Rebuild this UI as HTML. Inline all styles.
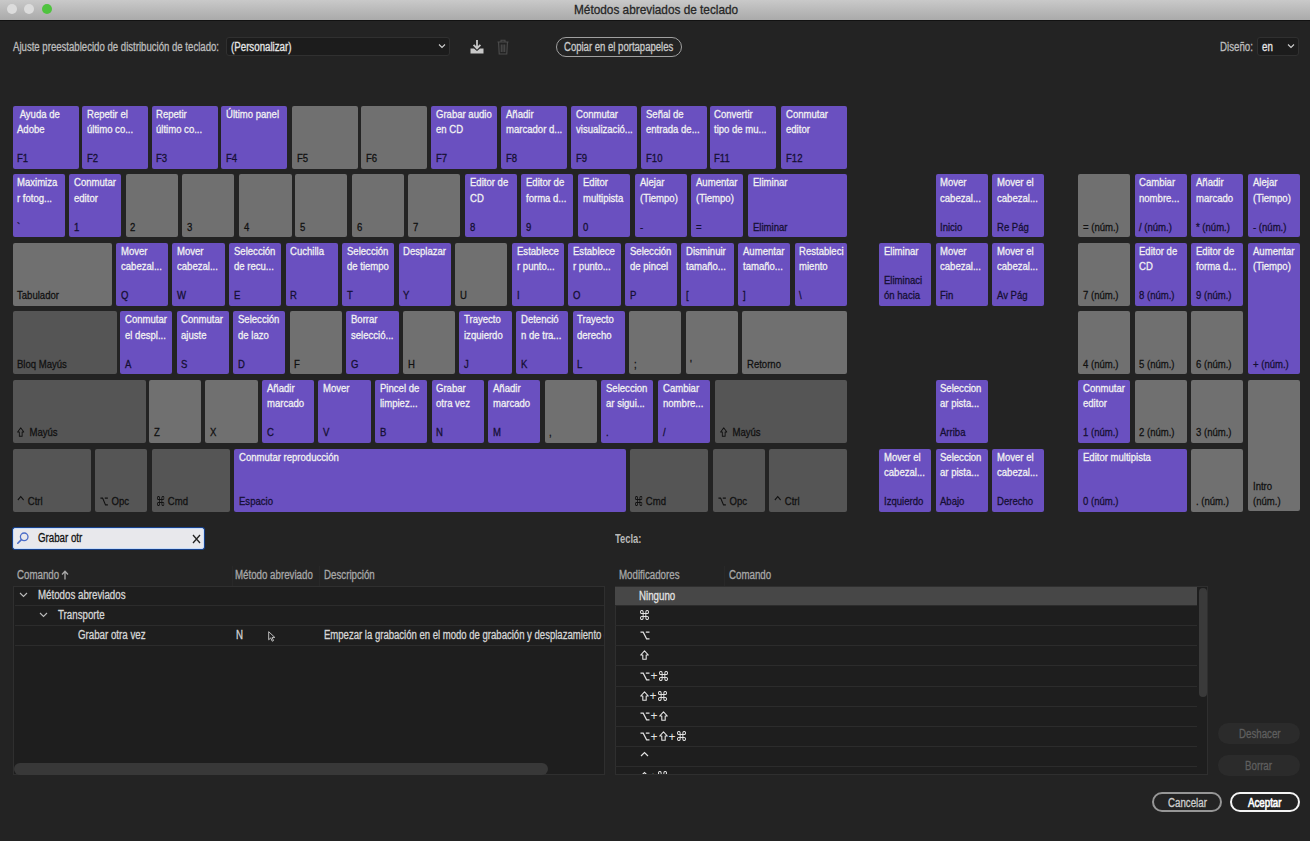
<!DOCTYPE html>
<html><head><meta charset="utf-8"><title>Métodos abreviados de teclado</title>
<style>
html,body{margin:0;padding:0}
body{width:1310px;height:841px;overflow:hidden;position:relative;background:#232323;font-family:"Liberation Sans",sans-serif}
.t{position:absolute;white-space:nowrap;transform-origin:0 0;-webkit-text-stroke:0.3px currentColor}
</style></head><body>

<div style="position:absolute;left:0.0px;top:0.0px;width:1310.0px;height:20.0px;background:linear-gradient(#c9c9c9,#aaaaaa)"></div>
<div style="position:absolute;left:0.0px;top:20.0px;width:1310.0px;height:1.0px;background:#121212"></div>
<div style="position:absolute;left:6.5px;top:4.0px;width:10.0px;height:10.0px;border-radius:50%;background:#dcdcdc"></div>
<div style="position:absolute;left:23.9px;top:4.0px;width:10.0px;height:10.0px;border-radius:50%;background:#dcdcdc"></div>
<div style="position:absolute;left:41.5px;top:4.0px;width:10.0px;height:10.0px;border-radius:50%;background:#4fc33f"></div>
<div class="t" style="left:573.5px;top:2.87px;font-size:13.5px;line-height:13.5px;color:#262626;transform:scaleX(0.875);font-weight:normal;">Métodos abreviados de teclado</div>
<div class="t" style="left:13.4px;top:41.24px;font-size:12px;line-height:12px;color:#bdbdbd;transform:scaleX(0.8);font-weight:normal;">Ajuste preestablecido de distribución de teclado:</div>
<div style="position:absolute;left:225.6px;top:37.3px;width:224.8px;height:19.1px;background:#1c1c1c;border:1px solid #303030;border-radius:3px;box-sizing:border-box"></div>
<div class="t" style="left:230.5px;top:40.84px;font-size:12px;line-height:12px;color:#e6e6e6;transform:scaleX(0.81);font-weight:normal;">(Personalizar)</div>
<svg style="position:absolute;left:437px;top:42px" width="10" height="8" viewBox="0 0 10 8"><path d="M2 2.5 L5 5.5 L8 2.5" fill="none" stroke="#d0d0d0" stroke-width="1.1"/></svg>
<svg style="position:absolute;left:469px;top:39px" width="16" height="16" viewBox="0 0 16 16"><path d="M8 1 V9 M4.6 5.8 L8 9.4 L11.4 5.8" fill="none" stroke="#c8c8c8" stroke-width="1.8"/><path d="M1.5 9.5 H5 L8 12 L11 9.5 H14.5 V14.5 H1.5 Z" fill="#c8c8c8"/></svg>
<svg style="position:absolute;left:497px;top:39px" width="12" height="16" viewBox="0 0 12 16"><path d="M0.5 3 H11.5 M4 3 V1.2 H8 V3 M1.6 3.5 L2.2 15 H9.8 L10.4 3.5 M4.3 5.5 V13 M6 5.5 V13 M7.7 5.5 V13" fill="none" stroke="#4d4d4d" stroke-width="1.1"/></svg>
<div style="position:absolute;left:555.7px;top:36.8px;width:126.7px;height:20.6px;border:1.5px solid #a0a0a0;border-radius:10px;box-sizing:border-box"></div>
<div class="t" style="left:564.2px;top:40.84px;font-size:12px;line-height:12px;color:#cacaca;transform:scaleX(0.795);font-weight:normal;">Copiar en el portapapeles</div>
<div class="t" style="left:1220.4px;top:40.84px;font-size:12px;line-height:12px;color:#bdbdbd;transform:scaleX(0.81);font-weight:normal;">Diseño:</div>
<div style="position:absolute;left:1257.4px;top:37.0px;width:42.0px;height:19.4px;background:#1c1c1c;border:1px solid #303030;border-radius:3px;box-sizing:border-box"></div>
<div class="t" style="left:1262.0px;top:40.84px;font-size:12px;line-height:12px;color:#e6e6e6;transform:scaleX(0.81);font-weight:normal;">en</div>
<svg style="position:absolute;left:1286px;top:42px" width="10" height="8" viewBox="0 0 10 8"><path d="M2 2.5 L5 5.5 L8 2.5" fill="none" stroke="#d0d0d0" stroke-width="1.1"/></svg>
<div style="position:absolute;left:12.6px;top:105.5px;width:66.1px;height:63.0px;background:#6a50c0;border-radius:2px"></div>
<div class="t" style="left:17.3px;top:108.77px;font-size:11.5px;line-height:11.5px;color:#f2f2f2;transform:scaleX(0.83);font-weight:normal;">&nbsp;Ayuda&nbsp;de</div>
<div class="t" style="left:17.3px;top:124.17px;font-size:11.5px;line-height:11.5px;color:#f2f2f2;transform:scaleX(0.83);font-weight:normal;">Adobe</div>
<div class="t" style="left:17.3px;top:153.17px;font-size:11.5px;line-height:11.5px;color:#150f33;transform:scaleX(0.83);font-weight:normal;">F1</div>
<div style="position:absolute;left:81.8px;top:105.5px;width:66.1px;height:63.0px;background:#6a50c0;border-radius:2px"></div>
<div class="t" style="left:86.5px;top:108.77px;font-size:11.5px;line-height:11.5px;color:#f2f2f2;transform:scaleX(0.83);font-weight:normal;">Repetir el</div>
<div class="t" style="left:86.5px;top:124.17px;font-size:11.5px;line-height:11.5px;color:#f2f2f2;transform:scaleX(0.83);font-weight:normal;">último co...</div>
<div class="t" style="left:86.5px;top:153.17px;font-size:11.5px;line-height:11.5px;color:#150f33;transform:scaleX(0.83);font-weight:normal;">F2</div>
<div style="position:absolute;left:151.6px;top:105.5px;width:66.1px;height:63.0px;background:#6a50c0;border-radius:2px"></div>
<div class="t" style="left:156.3px;top:108.77px;font-size:11.5px;line-height:11.5px;color:#f2f2f2;transform:scaleX(0.83);font-weight:normal;">Repetir</div>
<div class="t" style="left:156.3px;top:124.17px;font-size:11.5px;line-height:11.5px;color:#f2f2f2;transform:scaleX(0.83);font-weight:normal;">último co...</div>
<div class="t" style="left:156.3px;top:153.17px;font-size:11.5px;line-height:11.5px;color:#150f33;transform:scaleX(0.83);font-weight:normal;">F3</div>
<div style="position:absolute;left:220.9px;top:105.5px;width:66.1px;height:63.0px;background:#6a50c0;border-radius:2px"></div>
<div class="t" style="left:225.6px;top:108.77px;font-size:11.5px;line-height:11.5px;color:#f2f2f2;transform:scaleX(0.83);font-weight:normal;">Último panel</div>
<div class="t" style="left:225.6px;top:153.17px;font-size:11.5px;line-height:11.5px;color:#150f33;transform:scaleX(0.83);font-weight:normal;">F4</div>
<div style="position:absolute;left:291.9px;top:105.5px;width:66.1px;height:63.0px;background:#707070;border-radius:2px"></div>
<div class="t" style="left:296.6px;top:153.17px;font-size:11.5px;line-height:11.5px;color:#111111;transform:scaleX(0.83);font-weight:normal;">F5</div>
<div style="position:absolute;left:361.1px;top:105.5px;width:66.1px;height:63.0px;background:#707070;border-radius:2px"></div>
<div class="t" style="left:365.8px;top:153.17px;font-size:11.5px;line-height:11.5px;color:#111111;transform:scaleX(0.83);font-weight:normal;">F6</div>
<div style="position:absolute;left:430.9px;top:105.5px;width:66.1px;height:63.0px;background:#6a50c0;border-radius:2px"></div>
<div class="t" style="left:435.6px;top:108.77px;font-size:11.5px;line-height:11.5px;color:#f2f2f2;transform:scaleX(0.83);font-weight:normal;">Grabar audio</div>
<div class="t" style="left:435.6px;top:124.17px;font-size:11.5px;line-height:11.5px;color:#f2f2f2;transform:scaleX(0.83);font-weight:normal;">en CD</div>
<div class="t" style="left:435.6px;top:153.17px;font-size:11.5px;line-height:11.5px;color:#150f33;transform:scaleX(0.83);font-weight:normal;">F7</div>
<div style="position:absolute;left:501.4px;top:105.5px;width:66.1px;height:63.0px;background:#6a50c0;border-radius:2px"></div>
<div class="t" style="left:506.1px;top:108.77px;font-size:11.5px;line-height:11.5px;color:#f2f2f2;transform:scaleX(0.83);font-weight:normal;">Añadir</div>
<div class="t" style="left:506.1px;top:124.17px;font-size:11.5px;line-height:11.5px;color:#f2f2f2;transform:scaleX(0.83);font-weight:normal;">marcador d...</div>
<div class="t" style="left:506.1px;top:153.17px;font-size:11.5px;line-height:11.5px;color:#150f33;transform:scaleX(0.83);font-weight:normal;">F8</div>
<div style="position:absolute;left:570.8px;top:105.5px;width:66.1px;height:63.0px;background:#6a50c0;border-radius:2px"></div>
<div class="t" style="left:575.5px;top:108.77px;font-size:11.5px;line-height:11.5px;color:#f2f2f2;transform:scaleX(0.83);font-weight:normal;">Conmutar</div>
<div class="t" style="left:575.5px;top:124.17px;font-size:11.5px;line-height:11.5px;color:#f2f2f2;transform:scaleX(0.83);font-weight:normal;">visualizació...</div>
<div class="t" style="left:575.5px;top:153.17px;font-size:11.5px;line-height:11.5px;color:#150f33;transform:scaleX(0.83);font-weight:normal;">F9</div>
<div style="position:absolute;left:640.9px;top:105.5px;width:66.1px;height:63.0px;background:#6a50c0;border-radius:2px"></div>
<div class="t" style="left:645.6px;top:108.77px;font-size:11.5px;line-height:11.5px;color:#f2f2f2;transform:scaleX(0.83);font-weight:normal;">Señal de</div>
<div class="t" style="left:645.6px;top:124.17px;font-size:11.5px;line-height:11.5px;color:#f2f2f2;transform:scaleX(0.83);font-weight:normal;">entrada de...</div>
<div class="t" style="left:645.6px;top:153.17px;font-size:11.5px;line-height:11.5px;color:#150f33;transform:scaleX(0.83);font-weight:normal;">F10</div>
<div style="position:absolute;left:709.7px;top:105.5px;width:66.1px;height:63.0px;background:#6a50c0;border-radius:2px"></div>
<div class="t" style="left:714.4px;top:108.77px;font-size:11.5px;line-height:11.5px;color:#f2f2f2;transform:scaleX(0.83);font-weight:normal;">Convertir</div>
<div class="t" style="left:714.4px;top:124.17px;font-size:11.5px;line-height:11.5px;color:#f2f2f2;transform:scaleX(0.83);font-weight:normal;">tipo de mu...</div>
<div class="t" style="left:714.4px;top:153.17px;font-size:11.5px;line-height:11.5px;color:#150f33;transform:scaleX(0.83);font-weight:normal;">F11</div>
<div style="position:absolute;left:780.8px;top:105.5px;width:66.1px;height:63.0px;background:#6a50c0;border-radius:2px"></div>
<div class="t" style="left:785.5px;top:108.77px;font-size:11.5px;line-height:11.5px;color:#f2f2f2;transform:scaleX(0.83);font-weight:normal;">Conmutar</div>
<div class="t" style="left:785.5px;top:124.17px;font-size:11.5px;line-height:11.5px;color:#f2f2f2;transform:scaleX(0.83);font-weight:normal;">editor</div>
<div class="t" style="left:785.5px;top:153.17px;font-size:11.5px;line-height:11.5px;color:#150f33;transform:scaleX(0.83);font-weight:normal;">F12</div>
<div style="position:absolute;left:12.6px;top:174.0px;width:52.3px;height:63.0px;background:#6a50c0;border-radius:2px"></div>
<div class="t" style="left:17.3px;top:177.27px;font-size:11.5px;line-height:11.5px;color:#f2f2f2;transform:scaleX(0.83);font-weight:normal;">Maximiza</div>
<div class="t" style="left:17.3px;top:192.67px;font-size:11.5px;line-height:11.5px;color:#f2f2f2;transform:scaleX(0.83);font-weight:normal;">r fotog...</div>
<div class="t" style="left:17.3px;top:221.67px;font-size:11.5px;line-height:11.5px;color:#150f33;transform:scaleX(0.83);font-weight:normal;">`</div>
<div style="position:absolute;left:68.8px;top:174.0px;width:52.3px;height:63.0px;background:#6a50c0;border-radius:2px"></div>
<div class="t" style="left:73.5px;top:177.27px;font-size:11.5px;line-height:11.5px;color:#f2f2f2;transform:scaleX(0.83);font-weight:normal;">Conmutar</div>
<div class="t" style="left:73.5px;top:192.67px;font-size:11.5px;line-height:11.5px;color:#f2f2f2;transform:scaleX(0.83);font-weight:normal;">editor</div>
<div class="t" style="left:73.5px;top:221.67px;font-size:11.5px;line-height:11.5px;color:#150f33;transform:scaleX(0.83);font-weight:normal;">1</div>
<div style="position:absolute;left:125.6px;top:174.0px;width:52.3px;height:63.0px;background:#707070;border-radius:2px"></div>
<div class="t" style="left:130.3px;top:221.67px;font-size:11.5px;line-height:11.5px;color:#111111;transform:scaleX(0.83);font-weight:normal;">2</div>
<div style="position:absolute;left:181.9px;top:174.0px;width:52.3px;height:63.0px;background:#707070;border-radius:2px"></div>
<div class="t" style="left:186.6px;top:221.67px;font-size:11.5px;line-height:11.5px;color:#111111;transform:scaleX(0.83);font-weight:normal;">3</div>
<div style="position:absolute;left:239.3px;top:174.0px;width:52.3px;height:63.0px;background:#707070;border-radius:2px"></div>
<div class="t" style="left:244.0px;top:221.67px;font-size:11.5px;line-height:11.5px;color:#111111;transform:scaleX(0.83);font-weight:normal;">4</div>
<div style="position:absolute;left:295.1px;top:174.0px;width:52.3px;height:63.0px;background:#707070;border-radius:2px"></div>
<div class="t" style="left:299.8px;top:221.67px;font-size:11.5px;line-height:11.5px;color:#111111;transform:scaleX(0.83);font-weight:normal;">5</div>
<div style="position:absolute;left:351.9px;top:174.0px;width:52.3px;height:63.0px;background:#707070;border-radius:2px"></div>
<div class="t" style="left:356.6px;top:221.67px;font-size:11.5px;line-height:11.5px;color:#111111;transform:scaleX(0.83);font-weight:normal;">6</div>
<div style="position:absolute;left:408.1px;top:174.0px;width:52.3px;height:63.0px;background:#707070;border-radius:2px"></div>
<div class="t" style="left:412.8px;top:221.67px;font-size:11.5px;line-height:11.5px;color:#111111;transform:scaleX(0.83);font-weight:normal;">7</div>
<div style="position:absolute;left:464.8px;top:174.0px;width:52.3px;height:63.0px;background:#6a50c0;border-radius:2px"></div>
<div class="t" style="left:469.5px;top:177.27px;font-size:11.5px;line-height:11.5px;color:#f2f2f2;transform:scaleX(0.83);font-weight:normal;">Editor de</div>
<div class="t" style="left:469.5px;top:192.67px;font-size:11.5px;line-height:11.5px;color:#f2f2f2;transform:scaleX(0.83);font-weight:normal;">CD</div>
<div class="t" style="left:469.5px;top:221.67px;font-size:11.5px;line-height:11.5px;color:#150f33;transform:scaleX(0.83);font-weight:normal;">8</div>
<div style="position:absolute;left:521.2px;top:174.0px;width:52.3px;height:63.0px;background:#6a50c0;border-radius:2px"></div>
<div class="t" style="left:525.9px;top:177.27px;font-size:11.5px;line-height:11.5px;color:#f2f2f2;transform:scaleX(0.83);font-weight:normal;">Editor de</div>
<div class="t" style="left:525.9px;top:192.67px;font-size:11.5px;line-height:11.5px;color:#f2f2f2;transform:scaleX(0.83);font-weight:normal;">forma d...</div>
<div class="t" style="left:525.9px;top:221.67px;font-size:11.5px;line-height:11.5px;color:#150f33;transform:scaleX(0.83);font-weight:normal;">9</div>
<div style="position:absolute;left:577.8px;top:174.0px;width:52.3px;height:63.0px;background:#6a50c0;border-radius:2px"></div>
<div class="t" style="left:582.5px;top:177.27px;font-size:11.5px;line-height:11.5px;color:#f2f2f2;transform:scaleX(0.83);font-weight:normal;">Editor</div>
<div class="t" style="left:582.5px;top:192.67px;font-size:11.5px;line-height:11.5px;color:#f2f2f2;transform:scaleX(0.83);font-weight:normal;">multipista</div>
<div class="t" style="left:582.5px;top:221.67px;font-size:11.5px;line-height:11.5px;color:#150f33;transform:scaleX(0.83);font-weight:normal;">0</div>
<div style="position:absolute;left:634.9px;top:174.0px;width:52.3px;height:63.0px;background:#6a50c0;border-radius:2px"></div>
<div class="t" style="left:639.6px;top:177.27px;font-size:11.5px;line-height:11.5px;color:#f2f2f2;transform:scaleX(0.83);font-weight:normal;">Alejar</div>
<div class="t" style="left:639.6px;top:192.67px;font-size:11.5px;line-height:11.5px;color:#f2f2f2;transform:scaleX(0.83);font-weight:normal;">(Tiempo)</div>
<div class="t" style="left:639.6px;top:221.67px;font-size:11.5px;line-height:11.5px;color:#150f33;transform:scaleX(0.83);font-weight:normal;">-</div>
<div style="position:absolute;left:691.2px;top:174.0px;width:52.3px;height:63.0px;background:#6a50c0;border-radius:2px"></div>
<div class="t" style="left:695.9px;top:177.27px;font-size:11.5px;line-height:11.5px;color:#f2f2f2;transform:scaleX(0.83);font-weight:normal;">Aumentar</div>
<div class="t" style="left:695.9px;top:192.67px;font-size:11.5px;line-height:11.5px;color:#f2f2f2;transform:scaleX(0.83);font-weight:normal;">(Tiempo)</div>
<div class="t" style="left:695.9px;top:221.67px;font-size:11.5px;line-height:11.5px;color:#150f33;transform:scaleX(0.83);font-weight:normal;">=</div>
<div style="position:absolute;left:748.0px;top:174.0px;width:98.6px;height:63.0px;background:#6a50c0;border-radius:2px"></div>
<div class="t" style="left:752.7px;top:177.27px;font-size:11.5px;line-height:11.5px;color:#f2f2f2;transform:scaleX(0.83);font-weight:normal;">Eliminar</div>
<div class="t" style="left:752.7px;top:221.67px;font-size:11.5px;line-height:11.5px;color:#150f33;transform:scaleX(0.83);font-weight:normal;">Eliminar</div>
<div style="position:absolute;left:12.6px;top:242.5px;width:99.1px;height:63.0px;background:#707070;border-radius:2px"></div>
<div class="t" style="left:17.3px;top:290.17px;font-size:11.5px;line-height:11.5px;color:#111111;transform:scaleX(0.83);font-weight:normal;">Tabulador</div>
<div style="position:absolute;left:115.9px;top:242.5px;width:52.3px;height:63.0px;background:#6a50c0;border-radius:2px"></div>
<div class="t" style="left:120.6px;top:245.77px;font-size:11.5px;line-height:11.5px;color:#f2f2f2;transform:scaleX(0.83);font-weight:normal;">Mover</div>
<div class="t" style="left:120.6px;top:261.17px;font-size:11.5px;line-height:11.5px;color:#f2f2f2;transform:scaleX(0.83);font-weight:normal;">cabezal...</div>
<div class="t" style="left:120.6px;top:290.17px;font-size:11.5px;line-height:11.5px;color:#150f33;transform:scaleX(0.83);font-weight:normal;">Q</div>
<div style="position:absolute;left:172.4px;top:242.5px;width:52.3px;height:63.0px;background:#6a50c0;border-radius:2px"></div>
<div class="t" style="left:177.1px;top:245.77px;font-size:11.5px;line-height:11.5px;color:#f2f2f2;transform:scaleX(0.83);font-weight:normal;">Mover</div>
<div class="t" style="left:177.1px;top:261.17px;font-size:11.5px;line-height:11.5px;color:#f2f2f2;transform:scaleX(0.83);font-weight:normal;">cabezal...</div>
<div class="t" style="left:177.1px;top:290.17px;font-size:11.5px;line-height:11.5px;color:#150f33;transform:scaleX(0.83);font-weight:normal;">W</div>
<div style="position:absolute;left:229.0px;top:242.5px;width:52.3px;height:63.0px;background:#6a50c0;border-radius:2px"></div>
<div class="t" style="left:233.7px;top:245.77px;font-size:11.5px;line-height:11.5px;color:#f2f2f2;transform:scaleX(0.83);font-weight:normal;">Selección</div>
<div class="t" style="left:233.7px;top:261.17px;font-size:11.5px;line-height:11.5px;color:#f2f2f2;transform:scaleX(0.83);font-weight:normal;">de recu...</div>
<div class="t" style="left:233.7px;top:290.17px;font-size:11.5px;line-height:11.5px;color:#150f33;transform:scaleX(0.83);font-weight:normal;">E</div>
<div style="position:absolute;left:285.5px;top:242.5px;width:52.3px;height:63.0px;background:#6a50c0;border-radius:2px"></div>
<div class="t" style="left:290.2px;top:245.77px;font-size:11.5px;line-height:11.5px;color:#f2f2f2;transform:scaleX(0.83);font-weight:normal;">Cuchilla</div>
<div class="t" style="left:290.2px;top:290.17px;font-size:11.5px;line-height:11.5px;color:#150f33;transform:scaleX(0.83);font-weight:normal;">R</div>
<div style="position:absolute;left:342.1px;top:242.5px;width:52.3px;height:63.0px;background:#6a50c0;border-radius:2px"></div>
<div class="t" style="left:346.8px;top:245.77px;font-size:11.5px;line-height:11.5px;color:#f2f2f2;transform:scaleX(0.83);font-weight:normal;">Selección</div>
<div class="t" style="left:346.8px;top:261.17px;font-size:11.5px;line-height:11.5px;color:#f2f2f2;transform:scaleX(0.83);font-weight:normal;">de tiempo</div>
<div class="t" style="left:346.8px;top:290.17px;font-size:11.5px;line-height:11.5px;color:#150f33;transform:scaleX(0.83);font-weight:normal;">T</div>
<div style="position:absolute;left:398.6px;top:242.5px;width:52.3px;height:63.0px;background:#6a50c0;border-radius:2px"></div>
<div class="t" style="left:403.3px;top:245.77px;font-size:11.5px;line-height:11.5px;color:#f2f2f2;transform:scaleX(0.83);font-weight:normal;">Desplazar</div>
<div class="t" style="left:403.3px;top:290.17px;font-size:11.5px;line-height:11.5px;color:#150f33;transform:scaleX(0.83);font-weight:normal;">Y</div>
<div style="position:absolute;left:455.2px;top:242.5px;width:52.3px;height:63.0px;background:#707070;border-radius:2px"></div>
<div class="t" style="left:459.9px;top:290.17px;font-size:11.5px;line-height:11.5px;color:#111111;transform:scaleX(0.83);font-weight:normal;">U</div>
<div style="position:absolute;left:511.8px;top:242.5px;width:52.3px;height:63.0px;background:#6a50c0;border-radius:2px"></div>
<div class="t" style="left:516.5px;top:245.77px;font-size:11.5px;line-height:11.5px;color:#f2f2f2;transform:scaleX(0.83);font-weight:normal;">Establece</div>
<div class="t" style="left:516.5px;top:261.17px;font-size:11.5px;line-height:11.5px;color:#f2f2f2;transform:scaleX(0.83);font-weight:normal;">r punto...</div>
<div class="t" style="left:516.5px;top:290.17px;font-size:11.5px;line-height:11.5px;color:#150f33;transform:scaleX(0.83);font-weight:normal;">I</div>
<div style="position:absolute;left:568.3px;top:242.5px;width:52.3px;height:63.0px;background:#6a50c0;border-radius:2px"></div>
<div class="t" style="left:573.0px;top:245.77px;font-size:11.5px;line-height:11.5px;color:#f2f2f2;transform:scaleX(0.83);font-weight:normal;">Establece</div>
<div class="t" style="left:573.0px;top:261.17px;font-size:11.5px;line-height:11.5px;color:#f2f2f2;transform:scaleX(0.83);font-weight:normal;">r punto...</div>
<div class="t" style="left:573.0px;top:290.17px;font-size:11.5px;line-height:11.5px;color:#150f33;transform:scaleX(0.83);font-weight:normal;">O</div>
<div style="position:absolute;left:624.9px;top:242.5px;width:52.3px;height:63.0px;background:#6a50c0;border-radius:2px"></div>
<div class="t" style="left:629.6px;top:245.77px;font-size:11.5px;line-height:11.5px;color:#f2f2f2;transform:scaleX(0.83);font-weight:normal;">Selección</div>
<div class="t" style="left:629.6px;top:261.17px;font-size:11.5px;line-height:11.5px;color:#f2f2f2;transform:scaleX(0.83);font-weight:normal;">de pincel</div>
<div class="t" style="left:629.6px;top:290.17px;font-size:11.5px;line-height:11.5px;color:#150f33;transform:scaleX(0.83);font-weight:normal;">P</div>
<div style="position:absolute;left:681.4px;top:242.5px;width:52.3px;height:63.0px;background:#6a50c0;border-radius:2px"></div>
<div class="t" style="left:686.1px;top:245.77px;font-size:11.5px;line-height:11.5px;color:#f2f2f2;transform:scaleX(0.83);font-weight:normal;">Disminuir</div>
<div class="t" style="left:686.1px;top:261.17px;font-size:11.5px;line-height:11.5px;color:#f2f2f2;transform:scaleX(0.83);font-weight:normal;">tamaño...</div>
<div class="t" style="left:686.1px;top:290.17px;font-size:11.5px;line-height:11.5px;color:#150f33;transform:scaleX(0.83);font-weight:normal;">[</div>
<div style="position:absolute;left:737.9px;top:242.5px;width:52.3px;height:63.0px;background:#6a50c0;border-radius:2px"></div>
<div class="t" style="left:742.6px;top:245.77px;font-size:11.5px;line-height:11.5px;color:#f2f2f2;transform:scaleX(0.83);font-weight:normal;">Aumentar</div>
<div class="t" style="left:742.6px;top:261.17px;font-size:11.5px;line-height:11.5px;color:#f2f2f2;transform:scaleX(0.83);font-weight:normal;">tamaño...</div>
<div class="t" style="left:742.6px;top:290.17px;font-size:11.5px;line-height:11.5px;color:#150f33;transform:scaleX(0.83);font-weight:normal;">]</div>
<div style="position:absolute;left:794.5px;top:242.5px;width:52.3px;height:63.0px;background:#6a50c0;border-radius:2px"></div>
<div class="t" style="left:799.2px;top:245.77px;font-size:11.5px;line-height:11.5px;color:#f2f2f2;transform:scaleX(0.83);font-weight:normal;">Restableci</div>
<div class="t" style="left:799.2px;top:261.17px;font-size:11.5px;line-height:11.5px;color:#f2f2f2;transform:scaleX(0.83);font-weight:normal;">miento</div>
<div class="t" style="left:799.2px;top:290.17px;font-size:11.5px;line-height:11.5px;color:#150f33;transform:scaleX(0.83);font-weight:normal;">\</div>
<div style="position:absolute;left:12.6px;top:311.0px;width:104.4px;height:63.0px;background:#555555;border-radius:2px"></div>
<div class="t" style="left:17.3px;top:358.67px;font-size:11.5px;line-height:11.5px;color:#111111;transform:scaleX(0.83);font-weight:normal;">Bloq Mayús</div>
<div style="position:absolute;left:120.1px;top:311.0px;width:52.3px;height:63.0px;background:#6a50c0;border-radius:2px"></div>
<div class="t" style="left:124.8px;top:314.27px;font-size:11.5px;line-height:11.5px;color:#f2f2f2;transform:scaleX(0.83);font-weight:normal;">Conmutar</div>
<div class="t" style="left:124.8px;top:329.67px;font-size:11.5px;line-height:11.5px;color:#f2f2f2;transform:scaleX(0.83);font-weight:normal;">el despl...</div>
<div class="t" style="left:124.8px;top:358.67px;font-size:11.5px;line-height:11.5px;color:#150f33;transform:scaleX(0.83);font-weight:normal;">A</div>
<div style="position:absolute;left:176.6px;top:311.0px;width:52.3px;height:63.0px;background:#6a50c0;border-radius:2px"></div>
<div class="t" style="left:181.3px;top:314.27px;font-size:11.5px;line-height:11.5px;color:#f2f2f2;transform:scaleX(0.83);font-weight:normal;">Conmutar</div>
<div class="t" style="left:181.3px;top:329.67px;font-size:11.5px;line-height:11.5px;color:#f2f2f2;transform:scaleX(0.83);font-weight:normal;">ajuste</div>
<div class="t" style="left:181.3px;top:358.67px;font-size:11.5px;line-height:11.5px;color:#150f33;transform:scaleX(0.83);font-weight:normal;">S</div>
<div style="position:absolute;left:233.2px;top:311.0px;width:52.3px;height:63.0px;background:#6a50c0;border-radius:2px"></div>
<div class="t" style="left:237.9px;top:314.27px;font-size:11.5px;line-height:11.5px;color:#f2f2f2;transform:scaleX(0.83);font-weight:normal;">Selección</div>
<div class="t" style="left:237.9px;top:329.67px;font-size:11.5px;line-height:11.5px;color:#f2f2f2;transform:scaleX(0.83);font-weight:normal;">de lazo</div>
<div class="t" style="left:237.9px;top:358.67px;font-size:11.5px;line-height:11.5px;color:#150f33;transform:scaleX(0.83);font-weight:normal;">D</div>
<div style="position:absolute;left:289.8px;top:311.0px;width:52.3px;height:63.0px;background:#707070;border-radius:2px"></div>
<div class="t" style="left:294.4px;top:358.67px;font-size:11.5px;line-height:11.5px;color:#111111;transform:scaleX(0.83);font-weight:normal;">F</div>
<div style="position:absolute;left:346.3px;top:311.0px;width:52.3px;height:63.0px;background:#6a50c0;border-radius:2px"></div>
<div class="t" style="left:351.0px;top:314.27px;font-size:11.5px;line-height:11.5px;color:#f2f2f2;transform:scaleX(0.83);font-weight:normal;">Borrar</div>
<div class="t" style="left:351.0px;top:329.67px;font-size:11.5px;line-height:11.5px;color:#f2f2f2;transform:scaleX(0.83);font-weight:normal;">selecció...</div>
<div class="t" style="left:351.0px;top:358.67px;font-size:11.5px;line-height:11.5px;color:#150f33;transform:scaleX(0.83);font-weight:normal;">G</div>
<div style="position:absolute;left:402.9px;top:311.0px;width:52.3px;height:63.0px;background:#707070;border-radius:2px"></div>
<div class="t" style="left:407.6px;top:358.67px;font-size:11.5px;line-height:11.5px;color:#111111;transform:scaleX(0.83);font-weight:normal;">H</div>
<div style="position:absolute;left:459.4px;top:311.0px;width:52.3px;height:63.0px;background:#6a50c0;border-radius:2px"></div>
<div class="t" style="left:464.1px;top:314.27px;font-size:11.5px;line-height:11.5px;color:#f2f2f2;transform:scaleX(0.83);font-weight:normal;">Trayecto</div>
<div class="t" style="left:464.1px;top:329.67px;font-size:11.5px;line-height:11.5px;color:#f2f2f2;transform:scaleX(0.83);font-weight:normal;">izquierdo</div>
<div class="t" style="left:464.1px;top:358.67px;font-size:11.5px;line-height:11.5px;color:#150f33;transform:scaleX(0.83);font-weight:normal;">J</div>
<div style="position:absolute;left:515.9px;top:311.0px;width:52.3px;height:63.0px;background:#6a50c0;border-radius:2px"></div>
<div class="t" style="left:520.6px;top:314.27px;font-size:11.5px;line-height:11.5px;color:#f2f2f2;transform:scaleX(0.83);font-weight:normal;">Detenció</div>
<div class="t" style="left:520.6px;top:329.67px;font-size:11.5px;line-height:11.5px;color:#f2f2f2;transform:scaleX(0.83);font-weight:normal;">n de tra...</div>
<div class="t" style="left:520.6px;top:358.67px;font-size:11.5px;line-height:11.5px;color:#150f33;transform:scaleX(0.83);font-weight:normal;">K</div>
<div style="position:absolute;left:572.5px;top:311.0px;width:52.3px;height:63.0px;background:#6a50c0;border-radius:2px"></div>
<div class="t" style="left:577.2px;top:314.27px;font-size:11.5px;line-height:11.5px;color:#f2f2f2;transform:scaleX(0.83);font-weight:normal;">Trayecto</div>
<div class="t" style="left:577.2px;top:329.67px;font-size:11.5px;line-height:11.5px;color:#f2f2f2;transform:scaleX(0.83);font-weight:normal;">derecho</div>
<div class="t" style="left:577.2px;top:358.67px;font-size:11.5px;line-height:11.5px;color:#150f33;transform:scaleX(0.83);font-weight:normal;">L</div>
<div style="position:absolute;left:629.0px;top:311.0px;width:52.3px;height:63.0px;background:#707070;border-radius:2px"></div>
<div class="t" style="left:633.8px;top:358.67px;font-size:11.5px;line-height:11.5px;color:#111111;transform:scaleX(0.83);font-weight:normal;">;</div>
<div style="position:absolute;left:685.6px;top:311.0px;width:52.3px;height:63.0px;background:#707070;border-radius:2px"></div>
<div class="t" style="left:690.3px;top:358.67px;font-size:11.5px;line-height:11.5px;color:#111111;transform:scaleX(0.83);font-weight:normal;">&#x27;</div>
<div style="position:absolute;left:742.2px;top:311.0px;width:104.6px;height:63.0px;background:#707070;border-radius:2px"></div>
<div class="t" style="left:746.9px;top:358.67px;font-size:11.5px;line-height:11.5px;color:#111111;transform:scaleX(0.83);font-weight:normal;">Retorno</div>
<div style="position:absolute;left:12.6px;top:379.8px;width:133.4px;height:63.0px;background:#555555;border-radius:2px"></div>
<div class="t" style="left:17.3px;top:427.47px;font-size:11.5px;line-height:11.5px;color:#111111;transform:scaleX(0.83);font-weight:normal;"><svg width="9" height="10" viewBox="0 0 9 10" style="vertical-align:baseline;margin-top:-6px;position:relative;top:0.5px"><path d="M4.5 0.8 L8.3 5 H6.2 V9.2 H2.8 V5 H0.7 Z" fill="none" stroke="#111111" stroke-width="1.1" stroke-linejoin="round"/></svg><span style="display:inline-block;width:6px"></span>Mayús</div>
<div style="position:absolute;left:148.8px;top:379.8px;width:52.3px;height:63.0px;background:#707070;border-radius:2px"></div>
<div class="t" style="left:153.5px;top:427.47px;font-size:11.5px;line-height:11.5px;color:#111111;transform:scaleX(0.83);font-weight:normal;">Z</div>
<div style="position:absolute;left:205.4px;top:379.8px;width:52.3px;height:63.0px;background:#707070;border-radius:2px"></div>
<div class="t" style="left:210.1px;top:427.47px;font-size:11.5px;line-height:11.5px;color:#111111;transform:scaleX(0.83);font-weight:normal;">X</div>
<div style="position:absolute;left:261.9px;top:379.8px;width:52.3px;height:63.0px;background:#6a50c0;border-radius:2px"></div>
<div class="t" style="left:266.6px;top:383.07px;font-size:11.5px;line-height:11.5px;color:#f2f2f2;transform:scaleX(0.83);font-weight:normal;">Añadir</div>
<div class="t" style="left:266.6px;top:398.47px;font-size:11.5px;line-height:11.5px;color:#f2f2f2;transform:scaleX(0.83);font-weight:normal;">marcado</div>
<div class="t" style="left:266.6px;top:427.47px;font-size:11.5px;line-height:11.5px;color:#150f33;transform:scaleX(0.83);font-weight:normal;">C</div>
<div style="position:absolute;left:318.4px;top:379.8px;width:52.3px;height:63.0px;background:#6a50c0;border-radius:2px"></div>
<div class="t" style="left:323.1px;top:383.07px;font-size:11.5px;line-height:11.5px;color:#f2f2f2;transform:scaleX(0.83);font-weight:normal;">Mover</div>
<div class="t" style="left:323.1px;top:427.47px;font-size:11.5px;line-height:11.5px;color:#150f33;transform:scaleX(0.83);font-weight:normal;">V</div>
<div style="position:absolute;left:375.0px;top:379.8px;width:52.3px;height:63.0px;background:#6a50c0;border-radius:2px"></div>
<div class="t" style="left:379.7px;top:383.07px;font-size:11.5px;line-height:11.5px;color:#f2f2f2;transform:scaleX(0.83);font-weight:normal;">Pincel de</div>
<div class="t" style="left:379.7px;top:398.47px;font-size:11.5px;line-height:11.5px;color:#f2f2f2;transform:scaleX(0.83);font-weight:normal;">limpiez...</div>
<div class="t" style="left:379.7px;top:427.47px;font-size:11.5px;line-height:11.5px;color:#150f33;transform:scaleX(0.83);font-weight:normal;">B</div>
<div style="position:absolute;left:431.6px;top:379.8px;width:52.3px;height:63.0px;background:#6a50c0;border-radius:2px"></div>
<div class="t" style="left:436.2px;top:383.07px;font-size:11.5px;line-height:11.5px;color:#f2f2f2;transform:scaleX(0.83);font-weight:normal;">Grabar</div>
<div class="t" style="left:436.2px;top:398.47px;font-size:11.5px;line-height:11.5px;color:#f2f2f2;transform:scaleX(0.83);font-weight:normal;">otra vez</div>
<div class="t" style="left:436.2px;top:427.47px;font-size:11.5px;line-height:11.5px;color:#150f33;transform:scaleX(0.83);font-weight:normal;">N</div>
<div style="position:absolute;left:488.1px;top:379.8px;width:52.3px;height:63.0px;background:#6a50c0;border-radius:2px"></div>
<div class="t" style="left:492.8px;top:383.07px;font-size:11.5px;line-height:11.5px;color:#f2f2f2;transform:scaleX(0.83);font-weight:normal;">Añadir</div>
<div class="t" style="left:492.8px;top:398.47px;font-size:11.5px;line-height:11.5px;color:#f2f2f2;transform:scaleX(0.83);font-weight:normal;">marcado</div>
<div class="t" style="left:492.8px;top:427.47px;font-size:11.5px;line-height:11.5px;color:#150f33;transform:scaleX(0.83);font-weight:normal;">M</div>
<div style="position:absolute;left:544.6px;top:379.8px;width:52.3px;height:63.0px;background:#707070;border-radius:2px"></div>
<div class="t" style="left:549.4px;top:427.47px;font-size:11.5px;line-height:11.5px;color:#111111;transform:scaleX(0.83);font-weight:normal;">,</div>
<div style="position:absolute;left:601.2px;top:379.8px;width:52.3px;height:63.0px;background:#6a50c0;border-radius:2px"></div>
<div class="t" style="left:605.9px;top:383.07px;font-size:11.5px;line-height:11.5px;color:#f2f2f2;transform:scaleX(0.83);font-weight:normal;">Seleccion</div>
<div class="t" style="left:605.9px;top:398.47px;font-size:11.5px;line-height:11.5px;color:#f2f2f2;transform:scaleX(0.83);font-weight:normal;">ar sigui...</div>
<div class="t" style="left:605.9px;top:427.47px;font-size:11.5px;line-height:11.5px;color:#150f33;transform:scaleX(0.83);font-weight:normal;">.</div>
<div style="position:absolute;left:657.8px;top:379.8px;width:52.3px;height:63.0px;background:#6a50c0;border-radius:2px"></div>
<div class="t" style="left:662.5px;top:383.07px;font-size:11.5px;line-height:11.5px;color:#f2f2f2;transform:scaleX(0.83);font-weight:normal;">Cambiar</div>
<div class="t" style="left:662.5px;top:398.47px;font-size:11.5px;line-height:11.5px;color:#f2f2f2;transform:scaleX(0.83);font-weight:normal;">nombre...</div>
<div class="t" style="left:662.5px;top:427.47px;font-size:11.5px;line-height:11.5px;color:#150f33;transform:scaleX(0.83);font-weight:normal;">/</div>
<div style="position:absolute;left:715.1px;top:379.8px;width:131.9px;height:63.0px;background:#555555;border-radius:2px"></div>
<div class="t" style="left:719.8px;top:427.47px;font-size:11.5px;line-height:11.5px;color:#111111;transform:scaleX(0.83);font-weight:normal;"><svg width="9" height="10" viewBox="0 0 9 10" style="vertical-align:baseline;margin-top:-6px;position:relative;top:0.5px"><path d="M4.5 0.8 L8.3 5 H6.2 V9.2 H2.8 V5 H0.7 Z" fill="none" stroke="#111111" stroke-width="1.1" stroke-linejoin="round"/></svg><span style="display:inline-block;width:6px"></span>Mayús</div>
<div style="position:absolute;left:12.6px;top:448.5px;width:78.1px;height:63.0px;background:#555555;border-radius:2px"></div>
<div class="t" style="left:17.3px;top:496.17px;font-size:11.5px;line-height:11.5px;color:#111111;transform:scaleX(0.83);font-weight:normal;"><svg width="9" height="9" viewBox="0 0 9 9" style="vertical-align:baseline;margin-top:-6px;position:relative;top:-1px"><path d="M1 5 L4.5 1.5 L8 5" fill="none" stroke="#111111" stroke-width="1.2"/></svg><span style="display:inline-block;width:4px"></span>Ctrl</div>
<div style="position:absolute;left:95.2px;top:448.5px;width:51.9px;height:63.0px;background:#555555;border-radius:2px"></div>
<div class="t" style="left:99.9px;top:496.17px;font-size:11.5px;line-height:11.5px;color:#111111;transform:scaleX(0.83);font-weight:normal;"><svg width="10" height="9" viewBox="0 0 10 9" style="vertical-align:baseline;margin-top:-6px;position:relative;top:0.5px"><path d="M0.5 1.2 H3.2 L6.6 7.8 H9.5 M5.8 1.2 H9.5" fill="none" stroke="#111111" stroke-width="1.2"/></svg><span style="display:inline-block;width:4px"></span>Opc</div>
<div style="position:absolute;left:152.1px;top:448.5px;width:77.6px;height:63.0px;background:#555555;border-radius:2px"></div>
<div class="t" style="left:156.8px;top:496.17px;font-size:11.5px;line-height:11.5px;color:#111111;transform:scaleX(0.83);font-weight:normal;"><svg width="9" height="10" viewBox="0 0 10 10" preserveAspectRatio="none" style="vertical-align:baseline;margin-top:-6px;position:relative;top:0.5px"><path d="M3.5 3.5 V1.9 A1.5 1.5 0 1 0 1.9 3.5 H8.1 A1.5 1.5 0 1 0 6.5 1.9 V8.1 A1.5 1.5 0 1 0 8.1 6.5 H1.9 A1.5 1.5 0 1 0 3.5 8.1 Z" fill="none" stroke="#111111" stroke-width="1.05"/></svg><span style="display:inline-block;width:4px"></span>Cmd</div>
<div style="position:absolute;left:234.3px;top:448.5px;width:391.5px;height:63.0px;background:#6a50c0;border-radius:2px"></div>
<div class="t" style="left:239.0px;top:451.77px;font-size:11.5px;line-height:11.5px;color:#f2f2f2;transform:scaleX(0.83);font-weight:normal;">Conmutar reproducción</div>
<div class="t" style="left:239.0px;top:496.17px;font-size:11.5px;line-height:11.5px;color:#150f33;transform:scaleX(0.83);font-weight:normal;">Espacio</div>
<div style="position:absolute;left:630.3px;top:448.5px;width:78.0px;height:63.0px;background:#555555;border-radius:2px"></div>
<div class="t" style="left:635.0px;top:496.17px;font-size:11.5px;line-height:11.5px;color:#111111;transform:scaleX(0.83);font-weight:normal;"><svg width="9" height="10" viewBox="0 0 10 10" preserveAspectRatio="none" style="vertical-align:baseline;margin-top:-6px;position:relative;top:0.5px"><path d="M3.5 3.5 V1.9 A1.5 1.5 0 1 0 1.9 3.5 H8.1 A1.5 1.5 0 1 0 6.5 1.9 V8.1 A1.5 1.5 0 1 0 8.1 6.5 H1.9 A1.5 1.5 0 1 0 3.5 8.1 Z" fill="none" stroke="#111111" stroke-width="1.05"/></svg><span style="display:inline-block;width:4px"></span>Cmd</div>
<div style="position:absolute;left:713.1px;top:448.5px;width:51.7px;height:63.0px;background:#555555;border-radius:2px"></div>
<div class="t" style="left:717.8px;top:496.17px;font-size:11.5px;line-height:11.5px;color:#111111;transform:scaleX(0.83);font-weight:normal;"><svg width="10" height="9" viewBox="0 0 10 9" style="vertical-align:baseline;margin-top:-6px;position:relative;top:0.5px"><path d="M0.5 1.2 H3.2 L6.6 7.8 H9.5 M5.8 1.2 H9.5" fill="none" stroke="#111111" stroke-width="1.2"/></svg><span style="display:inline-block;width:4px"></span>Opc</div>
<div style="position:absolute;left:769.3px;top:448.5px;width:77.7px;height:63.0px;background:#555555;border-radius:2px"></div>
<div class="t" style="left:774.0px;top:496.17px;font-size:11.5px;line-height:11.5px;color:#111111;transform:scaleX(0.83);font-weight:normal;"><svg width="9" height="9" viewBox="0 0 9 9" style="vertical-align:baseline;margin-top:-6px;position:relative;top:-1px"><path d="M1 5 L4.5 1.5 L8 5" fill="none" stroke="#111111" stroke-width="1.2"/></svg><span style="display:inline-block;width:4px"></span>Ctrl</div>
<div style="position:absolute;left:935.6px;top:174.0px;width:52.3px;height:63.0px;background:#6a50c0;border-radius:2px"></div>
<div class="t" style="left:940.3px;top:177.27px;font-size:11.5px;line-height:11.5px;color:#f2f2f2;transform:scaleX(0.83);font-weight:normal;">Mover</div>
<div class="t" style="left:940.3px;top:192.67px;font-size:11.5px;line-height:11.5px;color:#f2f2f2;transform:scaleX(0.83);font-weight:normal;">cabezal...</div>
<div class="t" style="left:940.3px;top:221.67px;font-size:11.5px;line-height:11.5px;color:#150f33;transform:scaleX(0.83);font-weight:normal;">Inicio</div>
<div style="position:absolute;left:992.2px;top:174.0px;width:52.3px;height:63.0px;background:#6a50c0;border-radius:2px"></div>
<div class="t" style="left:996.9px;top:177.27px;font-size:11.5px;line-height:11.5px;color:#f2f2f2;transform:scaleX(0.83);font-weight:normal;">Mover el</div>
<div class="t" style="left:996.9px;top:192.67px;font-size:11.5px;line-height:11.5px;color:#f2f2f2;transform:scaleX(0.83);font-weight:normal;">cabezal...</div>
<div class="t" style="left:996.9px;top:221.67px;font-size:11.5px;line-height:11.5px;color:#150f33;transform:scaleX(0.83);font-weight:normal;">Re Pág</div>
<div style="position:absolute;left:879.0px;top:242.5px;width:52.3px;height:63.0px;background:#6a50c0;border-radius:2px"></div>
<div class="t" style="left:883.7px;top:245.77px;font-size:11.5px;line-height:11.5px;color:#f2f2f2;transform:scaleX(0.83);font-weight:normal;">Eliminar</div>
<div class="t" style="left:883.7px;top:274.77px;font-size:11.5px;line-height:11.5px;color:#150f33;transform:scaleX(0.83);font-weight:normal;">Eliminaci</div>
<div class="t" style="left:883.7px;top:290.17px;font-size:11.5px;line-height:11.5px;color:#150f33;transform:scaleX(0.83);font-weight:normal;">ón hacia</div>
<div style="position:absolute;left:935.6px;top:242.5px;width:52.3px;height:63.0px;background:#6a50c0;border-radius:2px"></div>
<div class="t" style="left:940.3px;top:245.77px;font-size:11.5px;line-height:11.5px;color:#f2f2f2;transform:scaleX(0.83);font-weight:normal;">Mover</div>
<div class="t" style="left:940.3px;top:261.17px;font-size:11.5px;line-height:11.5px;color:#f2f2f2;transform:scaleX(0.83);font-weight:normal;">cabezal...</div>
<div class="t" style="left:940.3px;top:290.17px;font-size:11.5px;line-height:11.5px;color:#150f33;transform:scaleX(0.83);font-weight:normal;">Fin</div>
<div style="position:absolute;left:992.2px;top:242.5px;width:52.3px;height:63.0px;background:#6a50c0;border-radius:2px"></div>
<div class="t" style="left:996.9px;top:245.77px;font-size:11.5px;line-height:11.5px;color:#f2f2f2;transform:scaleX(0.83);font-weight:normal;">Mover el</div>
<div class="t" style="left:996.9px;top:261.17px;font-size:11.5px;line-height:11.5px;color:#f2f2f2;transform:scaleX(0.83);font-weight:normal;">cabezal...</div>
<div class="t" style="left:996.9px;top:290.17px;font-size:11.5px;line-height:11.5px;color:#150f33;transform:scaleX(0.83);font-weight:normal;">Av Pág</div>
<div style="position:absolute;left:935.6px;top:379.8px;width:52.3px;height:63.0px;background:#6a50c0;border-radius:2px"></div>
<div class="t" style="left:940.3px;top:383.07px;font-size:11.5px;line-height:11.5px;color:#f2f2f2;transform:scaleX(0.83);font-weight:normal;">Seleccion</div>
<div class="t" style="left:940.3px;top:398.47px;font-size:11.5px;line-height:11.5px;color:#f2f2f2;transform:scaleX(0.83);font-weight:normal;">ar pista...</div>
<div class="t" style="left:940.3px;top:427.47px;font-size:11.5px;line-height:11.5px;color:#150f33;transform:scaleX(0.83);font-weight:normal;">Arriba</div>
<div style="position:absolute;left:879.0px;top:448.5px;width:52.3px;height:63.0px;background:#6a50c0;border-radius:2px"></div>
<div class="t" style="left:883.7px;top:451.77px;font-size:11.5px;line-height:11.5px;color:#f2f2f2;transform:scaleX(0.83);font-weight:normal;">Mover el</div>
<div class="t" style="left:883.7px;top:467.17px;font-size:11.5px;line-height:11.5px;color:#f2f2f2;transform:scaleX(0.83);font-weight:normal;">cabezal...</div>
<div class="t" style="left:883.7px;top:496.17px;font-size:11.5px;line-height:11.5px;color:#150f33;transform:scaleX(0.83);font-weight:normal;">Izquierdo</div>
<div style="position:absolute;left:935.6px;top:448.5px;width:52.3px;height:63.0px;background:#6a50c0;border-radius:2px"></div>
<div class="t" style="left:940.3px;top:451.77px;font-size:11.5px;line-height:11.5px;color:#f2f2f2;transform:scaleX(0.83);font-weight:normal;">Seleccion</div>
<div class="t" style="left:940.3px;top:467.17px;font-size:11.5px;line-height:11.5px;color:#f2f2f2;transform:scaleX(0.83);font-weight:normal;">ar pista...</div>
<div class="t" style="left:940.3px;top:496.17px;font-size:11.5px;line-height:11.5px;color:#150f33;transform:scaleX(0.83);font-weight:normal;">Abajo</div>
<div style="position:absolute;left:992.2px;top:448.5px;width:52.3px;height:63.0px;background:#6a50c0;border-radius:2px"></div>
<div class="t" style="left:996.9px;top:451.77px;font-size:11.5px;line-height:11.5px;color:#f2f2f2;transform:scaleX(0.83);font-weight:normal;">Mover el</div>
<div class="t" style="left:996.9px;top:467.17px;font-size:11.5px;line-height:11.5px;color:#f2f2f2;transform:scaleX(0.83);font-weight:normal;">cabezal...</div>
<div class="t" style="left:996.9px;top:496.17px;font-size:11.5px;line-height:11.5px;color:#150f33;transform:scaleX(0.83);font-weight:normal;">Derecho</div>
<div style="position:absolute;left:1078.2px;top:174.0px;width:52.3px;height:63.0px;background:#707070;border-radius:2px"></div>
<div class="t" style="left:1082.9px;top:221.67px;font-size:11.5px;line-height:11.5px;color:#111111;transform:scaleX(0.83);font-weight:normal;">= (núm.)</div>
<div style="position:absolute;left:1134.7px;top:174.0px;width:52.3px;height:63.0px;background:#6a50c0;border-radius:2px"></div>
<div class="t" style="left:1139.4px;top:177.27px;font-size:11.5px;line-height:11.5px;color:#f2f2f2;transform:scaleX(0.83);font-weight:normal;">Cambiar</div>
<div class="t" style="left:1139.4px;top:192.67px;font-size:11.5px;line-height:11.5px;color:#f2f2f2;transform:scaleX(0.83);font-weight:normal;">nombre...</div>
<div class="t" style="left:1139.4px;top:221.67px;font-size:11.5px;line-height:11.5px;color:#150f33;transform:scaleX(0.83);font-weight:normal;">/ (núm.)</div>
<div style="position:absolute;left:1191.2px;top:174.0px;width:52.3px;height:63.0px;background:#6a50c0;border-radius:2px"></div>
<div class="t" style="left:1195.9px;top:177.27px;font-size:11.5px;line-height:11.5px;color:#f2f2f2;transform:scaleX(0.83);font-weight:normal;">Añadir</div>
<div class="t" style="left:1195.9px;top:192.67px;font-size:11.5px;line-height:11.5px;color:#f2f2f2;transform:scaleX(0.83);font-weight:normal;">marcado</div>
<div class="t" style="left:1195.9px;top:221.67px;font-size:11.5px;line-height:11.5px;color:#150f33;transform:scaleX(0.83);font-weight:normal;">* (núm.)</div>
<div style="position:absolute;left:1247.8px;top:174.0px;width:52.3px;height:63.0px;background:#6a50c0;border-radius:2px"></div>
<div class="t" style="left:1252.5px;top:177.27px;font-size:11.5px;line-height:11.5px;color:#f2f2f2;transform:scaleX(0.83);font-weight:normal;">Alejar</div>
<div class="t" style="left:1252.5px;top:192.67px;font-size:11.5px;line-height:11.5px;color:#f2f2f2;transform:scaleX(0.83);font-weight:normal;">(Tiempo)</div>
<div class="t" style="left:1252.5px;top:221.67px;font-size:11.5px;line-height:11.5px;color:#150f33;transform:scaleX(0.83);font-weight:normal;">- (núm.)</div>
<div style="position:absolute;left:1078.2px;top:242.5px;width:52.3px;height:63.0px;background:#707070;border-radius:2px"></div>
<div class="t" style="left:1082.9px;top:290.17px;font-size:11.5px;line-height:11.5px;color:#111111;transform:scaleX(0.83);font-weight:normal;">7 (núm.)</div>
<div style="position:absolute;left:1134.7px;top:242.5px;width:52.3px;height:63.0px;background:#6a50c0;border-radius:2px"></div>
<div class="t" style="left:1139.4px;top:245.77px;font-size:11.5px;line-height:11.5px;color:#f2f2f2;transform:scaleX(0.83);font-weight:normal;">Editor de</div>
<div class="t" style="left:1139.4px;top:261.17px;font-size:11.5px;line-height:11.5px;color:#f2f2f2;transform:scaleX(0.83);font-weight:normal;">CD</div>
<div class="t" style="left:1139.4px;top:290.17px;font-size:11.5px;line-height:11.5px;color:#150f33;transform:scaleX(0.83);font-weight:normal;">8 (núm.)</div>
<div style="position:absolute;left:1191.2px;top:242.5px;width:52.3px;height:63.0px;background:#6a50c0;border-radius:2px"></div>
<div class="t" style="left:1195.9px;top:245.77px;font-size:11.5px;line-height:11.5px;color:#f2f2f2;transform:scaleX(0.83);font-weight:normal;">Editor de</div>
<div class="t" style="left:1195.9px;top:261.17px;font-size:11.5px;line-height:11.5px;color:#f2f2f2;transform:scaleX(0.83);font-weight:normal;">forma d...</div>
<div class="t" style="left:1195.9px;top:290.17px;font-size:11.5px;line-height:11.5px;color:#150f33;transform:scaleX(0.83);font-weight:normal;">9 (núm.)</div>
<div style="position:absolute;left:1247.8px;top:242.5px;width:52.3px;height:131.5px;background:#6a50c0;border-radius:2px"></div>
<div class="t" style="left:1252.5px;top:245.77px;font-size:11.5px;line-height:11.5px;color:#f2f2f2;transform:scaleX(0.83);font-weight:normal;">Aumentar</div>
<div class="t" style="left:1252.5px;top:261.17px;font-size:11.5px;line-height:11.5px;color:#f2f2f2;transform:scaleX(0.83);font-weight:normal;">(Tiempo)</div>
<div class="t" style="left:1252.5px;top:358.67px;font-size:11.5px;line-height:11.5px;color:#150f33;transform:scaleX(0.83);font-weight:normal;">+ (núm.)</div>
<div style="position:absolute;left:1078.2px;top:311.0px;width:52.3px;height:63.0px;background:#707070;border-radius:2px"></div>
<div class="t" style="left:1082.9px;top:358.67px;font-size:11.5px;line-height:11.5px;color:#111111;transform:scaleX(0.83);font-weight:normal;">4 (núm.)</div>
<div style="position:absolute;left:1134.7px;top:311.0px;width:52.3px;height:63.0px;background:#707070;border-radius:2px"></div>
<div class="t" style="left:1139.4px;top:358.67px;font-size:11.5px;line-height:11.5px;color:#111111;transform:scaleX(0.83);font-weight:normal;">5 (núm.)</div>
<div style="position:absolute;left:1191.2px;top:311.0px;width:52.3px;height:63.0px;background:#707070;border-radius:2px"></div>
<div class="t" style="left:1195.9px;top:358.67px;font-size:11.5px;line-height:11.5px;color:#111111;transform:scaleX(0.83);font-weight:normal;">6 (núm.)</div>
<div style="position:absolute;left:1078.2px;top:379.8px;width:52.3px;height:63.0px;background:#6a50c0;border-radius:2px"></div>
<div class="t" style="left:1082.9px;top:383.07px;font-size:11.5px;line-height:11.5px;color:#f2f2f2;transform:scaleX(0.83);font-weight:normal;">Conmutar</div>
<div class="t" style="left:1082.9px;top:398.47px;font-size:11.5px;line-height:11.5px;color:#f2f2f2;transform:scaleX(0.83);font-weight:normal;">editor</div>
<div class="t" style="left:1082.9px;top:427.47px;font-size:11.5px;line-height:11.5px;color:#150f33;transform:scaleX(0.83);font-weight:normal;">1 (núm.)</div>
<div style="position:absolute;left:1134.7px;top:379.8px;width:52.3px;height:63.0px;background:#707070;border-radius:2px"></div>
<div class="t" style="left:1139.4px;top:427.47px;font-size:11.5px;line-height:11.5px;color:#111111;transform:scaleX(0.83);font-weight:normal;">2 (núm.)</div>
<div style="position:absolute;left:1191.2px;top:379.8px;width:52.3px;height:63.0px;background:#707070;border-radius:2px"></div>
<div class="t" style="left:1195.9px;top:427.47px;font-size:11.5px;line-height:11.5px;color:#111111;transform:scaleX(0.83);font-weight:normal;">3 (núm.)</div>
<div style="position:absolute;left:1247.8px;top:379.8px;width:52.3px;height:131.7px;background:#707070;border-radius:2px"></div>
<div class="t" style="left:1252.5px;top:480.77px;font-size:11.5px;line-height:11.5px;color:#111111;transform:scaleX(0.83);font-weight:normal;">Intro</div>
<div class="t" style="left:1252.5px;top:496.17px;font-size:11.5px;line-height:11.5px;color:#111111;transform:scaleX(0.83);font-weight:normal;">(núm.)</div>
<div style="position:absolute;left:1078.2px;top:448.5px;width:108.8px;height:63.0px;background:#6a50c0;border-radius:2px"></div>
<div class="t" style="left:1082.9px;top:451.77px;font-size:11.5px;line-height:11.5px;color:#f2f2f2;transform:scaleX(0.83);font-weight:normal;">Editor multipista</div>
<div class="t" style="left:1082.9px;top:496.17px;font-size:11.5px;line-height:11.5px;color:#150f33;transform:scaleX(0.83);font-weight:normal;">0 (núm.)</div>
<div style="position:absolute;left:1191.2px;top:448.5px;width:52.3px;height:63.0px;background:#707070;border-radius:2px"></div>
<div class="t" style="left:1195.9px;top:496.17px;font-size:11.5px;line-height:11.5px;color:#111111;transform:scaleX(0.83);font-weight:normal;">. (núm.)</div>
<div style="position:absolute;left:12.6px;top:528.0px;width:191.6px;height:20.6px;background:#e8e8ec;border:1px solid #c7dcfa;box-shadow:0 0 0 1px #17408a;border-radius:2px;box-sizing:border-box"></div>
<svg style="position:absolute;left:16px;top:531px" width="14" height="14" viewBox="0 0 14 14"><circle cx="8.2" cy="5.8" r="3.8" fill="none" stroke="#4a6cc8" stroke-width="1.3"/><path d="M5.4 8.6 L1.8 12.2" stroke="#4a6cc8" stroke-width="1.6" stroke-linecap="round"/></svg>
<div class="t" style="left:37.8px;top:531.94px;font-size:12px;line-height:12px;color:#111;transform:scaleX(0.81);font-weight:normal;">Grabar otr</div>
<svg style="position:absolute;left:192px;top:534px" width="9" height="10" viewBox="0 0 9 10"><path d="M1 1 L8 9 M8 1 L1 9" stroke="#222" stroke-width="1.3"/></svg>
<div class="t" style="left:614.9px;top:532.84px;font-size:12px;line-height:12px;color:#b8b8b8;transform:scaleX(0.78);font-weight:bold;-webkit-text-stroke:0">Tecla:</div>
<div class="t" style="left:17.0px;top:568.94px;font-size:12px;line-height:12px;color:#a8a8a8;transform:scaleX(0.81);font-weight:normal;">Comando</div>
<svg style="position:absolute;left:60.5px;top:569.5px" width="8" height="10" viewBox="0 0 8 10"><path d="M4 9.5 V1.5 M1 4.5 L4 1.2 L7 4.5" fill="none" stroke="#a8a8a8" stroke-width="1.3"/></svg>
<div style="position:absolute;left:231.5px;top:566.0px;width:1.0px;height:20.0px;background:#282828"></div>
<div style="position:absolute;left:318.5px;top:566.0px;width:1.0px;height:20.0px;background:#282828"></div>
<div class="t" style="left:235.0px;top:568.94px;font-size:12px;line-height:12px;color:#a8a8a8;transform:scaleX(0.81);font-weight:normal;">Método abreviado</div>
<div class="t" style="left:323.5px;top:568.94px;font-size:12px;line-height:12px;color:#a8a8a8;transform:scaleX(0.81);font-weight:normal;">Descripción</div>
<div style="position:absolute;left:13.2px;top:586.2px;width:592.3px;height:189.0px;background:#1e1e1e;border:1px solid #2f2f2f;box-sizing:border-box"></div>
<div style="position:absolute;left:14.5px;top:605.2px;width:589.5px;height:1.0px;background:#2c2c2c"></div>
<div style="position:absolute;left:14.5px;top:625.2px;width:589.5px;height:1.0px;background:#2c2c2c"></div>
<div style="position:absolute;left:14.5px;top:645.0px;width:589.5px;height:1.0px;background:#2c2c2c"></div>
<svg style="position:absolute;left:18.6px;top:591.5px" width="9" height="6" viewBox="0 0 9 6"><path d="M1 1 L4.5 4.5 L8 1" fill="none" stroke="#bdbdbd" stroke-width="1.1"/></svg>
<svg style="position:absolute;left:38.6px;top:611.7px" width="9" height="6" viewBox="0 0 9 6"><path d="M1 1 L4.5 4.5 L8 1" fill="none" stroke="#bdbdbd" stroke-width="1.1"/></svg>
<div class="t" style="left:37.7px;top:589.14px;font-size:12px;line-height:12px;color:#d6d6d6;transform:scaleX(0.81);font-weight:normal;">Métodos abreviados</div>
<div class="t" style="left:57.9px;top:609.24px;font-size:12px;line-height:12px;color:#d6d6d6;transform:scaleX(0.81);font-weight:normal;">Transporte</div>
<div class="t" style="left:78.0px;top:629.44px;font-size:12px;line-height:12px;color:#d6d6d6;transform:scaleX(0.81);font-weight:normal;">Grabar otra vez</div>
<div class="t" style="left:236.2px;top:629.44px;font-size:12px;line-height:12px;color:#d6d6d6;transform:scaleX(0.81);font-weight:normal;">N</div>
<div style="position:absolute;left:0;top:0;width:604px;height:841px;overflow:hidden">
<div class="t" style="left:324.2px;top:629.44px;font-size:12px;line-height:12px;color:#d6d6d6;transform:scaleX(0.795);font-weight:normal;">Empezar la grabación en el modo de grabación y desplazamiento de</div>
</div>
<svg style="position:absolute;left:268px;top:631px" width="8" height="11" viewBox="0 0 8 11"><path d="M0.7 0.7 V8.8 L2.7 6.9 L4.2 10.2 L5.5 9.6 L4.1 6.4 H6.8 Z" fill="#1e1e1e" stroke="#cfcfcf" stroke-width="0.9"/></svg>
<div style="position:absolute;left:13.5px;top:763.0px;width:534.0px;height:12.0px;background:#383838;border-radius:6px"></div>
<div class="t" style="left:619.0px;top:569.34px;font-size:12px;line-height:12px;color:#a8a8a8;transform:scaleX(0.81);font-weight:normal;">Modificadores</div>
<div style="position:absolute;left:724.0px;top:566.0px;width:1.0px;height:20.0px;background:#282828"></div>
<div class="t" style="left:728.6px;top:569.34px;font-size:12px;line-height:12px;color:#a8a8a8;transform:scaleX(0.81);font-weight:normal;">Comando</div>
<div style="position:absolute;left:615.0px;top:586.2px;width:593.0px;height:188.5px;background:#1e1e1e;border:1px solid #2f2f2f;box-sizing:border-box"></div>
<div style="position:absolute;left:615.0px;top:586.5px;width:582.5px;height:187.5px;overflow:hidden">
<div style="position:absolute;left:0;top:0px;width:582px;height:18.5px;background:#474747"></div>
<div class="t" style="left:24.2px;top:3.60px;font-size:12px;line-height:12px;color:#e2e2e2;transform:scaleX(0.81)">Ninguno</div>
<div style="position:absolute;left:0;top:18.5px;width:582px;height:1px;background:#2c2c2c"></div>
<div style="position:absolute;left:24.5px;top:24.1px;white-space:nowrap;line-height:10px;font-size:12px"><svg width="9" height="10" viewBox="0 0 10 10" preserveAspectRatio="none" style="vertical-align:baseline;margin-top:-6px;position:relative;top:0.5px"><path d="M3.5 3.5 V1.9 A1.5 1.5 0 1 0 1.9 3.5 H8.1 A1.5 1.5 0 1 0 6.5 1.9 V8.1 A1.5 1.5 0 1 0 8.1 6.5 H1.9 A1.5 1.5 0 1 0 3.5 8.1 Z" fill="none" stroke="#e2e2e2" stroke-width="1.05"/></svg></div>
<div style="position:absolute;left:0;top:38.6px;width:582px;height:1px;background:#2c2c2c"></div>
<div style="position:absolute;left:24.5px;top:44.3px;white-space:nowrap;line-height:10px;font-size:12px"><svg width="10" height="9" viewBox="0 0 10 9" style="vertical-align:baseline;margin-top:-6px;position:relative;top:0.5px"><path d="M0.5 1.2 H3.2 L6.6 7.8 H9.5 M5.8 1.2 H9.5" fill="none" stroke="#e2e2e2" stroke-width="1.2"/></svg></div>
<div style="position:absolute;left:0;top:58.8px;width:582px;height:1px;background:#2c2c2c"></div>
<div style="position:absolute;left:24.5px;top:64.4px;white-space:nowrap;line-height:10px;font-size:12px"><svg width="9" height="10" viewBox="0 0 9 10" style="vertical-align:baseline;margin-top:-6px;position:relative;top:0.5px"><path d="M4.5 0.8 L8.3 5 H6.2 V9.2 H2.8 V5 H0.7 Z" fill="none" stroke="#e2e2e2" stroke-width="1.1" stroke-linejoin="round"/></svg></div>
<div style="position:absolute;left:0;top:78.9px;width:582px;height:1px;background:#2c2c2c"></div>
<div style="position:absolute;left:24.5px;top:84.6px;white-space:nowrap;line-height:10px;font-size:12px"><svg width="10" height="9" viewBox="0 0 10 9" style="vertical-align:baseline;margin-top:-6px;position:relative;top:0.5px"><path d="M0.5 1.2 H3.2 L6.6 7.8 H9.5 M5.8 1.2 H9.5" fill="none" stroke="#e2e2e2" stroke-width="1.2"/></svg><span style="display:inline-block;width:1px"></span><span style="color:#e2e2e2;font-size:12px;position:relative;top:0px">+</span><span style="display:inline-block;width:1px"></span><svg width="9" height="10" viewBox="0 0 10 10" preserveAspectRatio="none" style="vertical-align:baseline;margin-top:-6px;position:relative;top:0.5px"><path d="M3.5 3.5 V1.9 A1.5 1.5 0 1 0 1.9 3.5 H8.1 A1.5 1.5 0 1 0 6.5 1.9 V8.1 A1.5 1.5 0 1 0 8.1 6.5 H1.9 A1.5 1.5 0 1 0 3.5 8.1 Z" fill="none" stroke="#e2e2e2" stroke-width="1.05"/></svg></div>
<div style="position:absolute;left:0;top:99.1px;width:582px;height:1px;background:#2c2c2c"></div>
<div style="position:absolute;left:24.5px;top:104.8px;white-space:nowrap;line-height:10px;font-size:12px"><svg width="9" height="10" viewBox="0 0 9 10" style="vertical-align:baseline;margin-top:-6px;position:relative;top:0.5px"><path d="M4.5 0.8 L8.3 5 H6.2 V9.2 H2.8 V5 H0.7 Z" fill="none" stroke="#e2e2e2" stroke-width="1.1" stroke-linejoin="round"/></svg><span style="display:inline-block;width:1px"></span><span style="color:#e2e2e2;font-size:12px;position:relative;top:0px">+</span><span style="display:inline-block;width:1px"></span><svg width="9" height="10" viewBox="0 0 10 10" preserveAspectRatio="none" style="vertical-align:baseline;margin-top:-6px;position:relative;top:0.5px"><path d="M3.5 3.5 V1.9 A1.5 1.5 0 1 0 1.9 3.5 H8.1 A1.5 1.5 0 1 0 6.5 1.9 V8.1 A1.5 1.5 0 1 0 8.1 6.5 H1.9 A1.5 1.5 0 1 0 3.5 8.1 Z" fill="none" stroke="#e2e2e2" stroke-width="1.05"/></svg></div>
<div style="position:absolute;left:0;top:119.2px;width:582px;height:1px;background:#2c2c2c"></div>
<div style="position:absolute;left:24.5px;top:124.9px;white-space:nowrap;line-height:10px;font-size:12px"><svg width="10" height="9" viewBox="0 0 10 9" style="vertical-align:baseline;margin-top:-6px;position:relative;top:0.5px"><path d="M0.5 1.2 H3.2 L6.6 7.8 H9.5 M5.8 1.2 H9.5" fill="none" stroke="#e2e2e2" stroke-width="1.2"/></svg><span style="display:inline-block;width:1px"></span><span style="color:#e2e2e2;font-size:12px;position:relative;top:0px">+</span><span style="display:inline-block;width:1px"></span><svg width="9" height="10" viewBox="0 0 9 10" style="vertical-align:baseline;margin-top:-6px;position:relative;top:0.5px"><path d="M4.5 0.8 L8.3 5 H6.2 V9.2 H2.8 V5 H0.7 Z" fill="none" stroke="#e2e2e2" stroke-width="1.1" stroke-linejoin="round"/></svg></div>
<div style="position:absolute;left:0;top:139.4px;width:582px;height:1px;background:#2c2c2c"></div>
<div style="position:absolute;left:24.5px;top:145.0px;white-space:nowrap;line-height:10px;font-size:12px"><svg width="10" height="9" viewBox="0 0 10 9" style="vertical-align:baseline;margin-top:-6px;position:relative;top:0.5px"><path d="M0.5 1.2 H3.2 L6.6 7.8 H9.5 M5.8 1.2 H9.5" fill="none" stroke="#e2e2e2" stroke-width="1.2"/></svg><span style="display:inline-block;width:1px"></span><span style="color:#e2e2e2;font-size:12px;position:relative;top:0px">+</span><span style="display:inline-block;width:1px"></span><svg width="9" height="10" viewBox="0 0 9 10" style="vertical-align:baseline;margin-top:-6px;position:relative;top:0.5px"><path d="M4.5 0.8 L8.3 5 H6.2 V9.2 H2.8 V5 H0.7 Z" fill="none" stroke="#e2e2e2" stroke-width="1.1" stroke-linejoin="round"/></svg><span style="display:inline-block;width:1px"></span><span style="color:#e2e2e2;font-size:12px;position:relative;top:0px">+</span><span style="display:inline-block;width:1px"></span><svg width="9" height="10" viewBox="0 0 10 10" preserveAspectRatio="none" style="vertical-align:baseline;margin-top:-6px;position:relative;top:0.5px"><path d="M3.5 3.5 V1.9 A1.5 1.5 0 1 0 1.9 3.5 H8.1 A1.5 1.5 0 1 0 6.5 1.9 V8.1 A1.5 1.5 0 1 0 8.1 6.5 H1.9 A1.5 1.5 0 1 0 3.5 8.1 Z" fill="none" stroke="#e2e2e2" stroke-width="1.05"/></svg></div>
<div style="position:absolute;left:0;top:159.5px;width:582px;height:1px;background:#2c2c2c"></div>
<div style="position:absolute;left:24.5px;top:165.2px;white-space:nowrap;line-height:10px;font-size:12px"><svg width="9" height="9" viewBox="0 0 9 9" style="vertical-align:baseline;margin-top:-6px;position:relative;top:-1px"><path d="M1 5 L4.5 1.5 L8 5" fill="none" stroke="#e2e2e2" stroke-width="1.2"/></svg></div>
<div style="position:absolute;left:0;top:179.7px;width:582px;height:1px;background:#2c2c2c"></div>
<div style="position:absolute;left:24.5px;top:185.3px;white-space:nowrap;line-height:10px;font-size:12px"><svg width="9" height="9" viewBox="0 0 9 9" style="vertical-align:baseline;margin-top:-6px;position:relative;top:-1px"><path d="M1 5 L4.5 1.5 L8 5" fill="none" stroke="#e2e2e2" stroke-width="1.2"/></svg><span style="display:inline-block;width:1px"></span><span style="color:#e2e2e2;font-size:12px;position:relative;top:0px">+</span><span style="display:inline-block;width:1px"></span><svg width="9" height="10" viewBox="0 0 10 10" preserveAspectRatio="none" style="vertical-align:baseline;margin-top:-6px;position:relative;top:0.5px"><path d="M3.5 3.5 V1.9 A1.5 1.5 0 1 0 1.9 3.5 H8.1 A1.5 1.5 0 1 0 6.5 1.9 V8.1 A1.5 1.5 0 1 0 8.1 6.5 H1.9 A1.5 1.5 0 1 0 3.5 8.1 Z" fill="none" stroke="#e2e2e2" stroke-width="1.05"/></svg></div>
</div>
<div style="position:absolute;left:1199.0px;top:587.7px;width:7.5px;height:109.5px;background:#3a3a3a;border-radius:4px"></div>
<div style="position:absolute;left:1217.6px;top:723.0px;width:82.7px;height:21.0px;background:#2b2b2b;border-radius:11px"></div>
<div class="t" style="left:1238.5px;top:727.64px;font-size:12px;line-height:12px;color:#5f5f5f;transform:scaleX(0.81);font-weight:normal;">Deshacer</div>
<div style="position:absolute;left:1217.6px;top:755.2px;width:82.7px;height:21.0px;background:#2b2b2b;border-radius:11px"></div>
<div class="t" style="left:1245.0px;top:759.84px;font-size:12px;line-height:12px;color:#5f5f5f;transform:scaleX(0.81);font-weight:normal;">Borrar</div>
<div style="position:absolute;left:1152.2px;top:791.6px;width:69.5px;height:20.6px;border:2px solid #969696;border-radius:10.3px;box-sizing:border-box"></div>
<div class="t" style="left:1167.5px;top:796.84px;font-size:12px;line-height:12px;color:#cfcfcf;transform:scaleX(0.81);font-weight:normal;">Cancelar</div>
<div style="position:absolute;left:1230.4px;top:791.6px;width:69.3px;height:20.6px;border:2px solid #f4f4f4;border-radius:10.3px;box-sizing:border-box"></div>
<div class="t" style="left:1248.0px;top:796.84px;font-size:12px;line-height:12px;color:#ffffff;transform:scaleX(0.81);font-weight:normal;-webkit-text-stroke:0.6px #fff">Aceptar</div>
</body></html>
